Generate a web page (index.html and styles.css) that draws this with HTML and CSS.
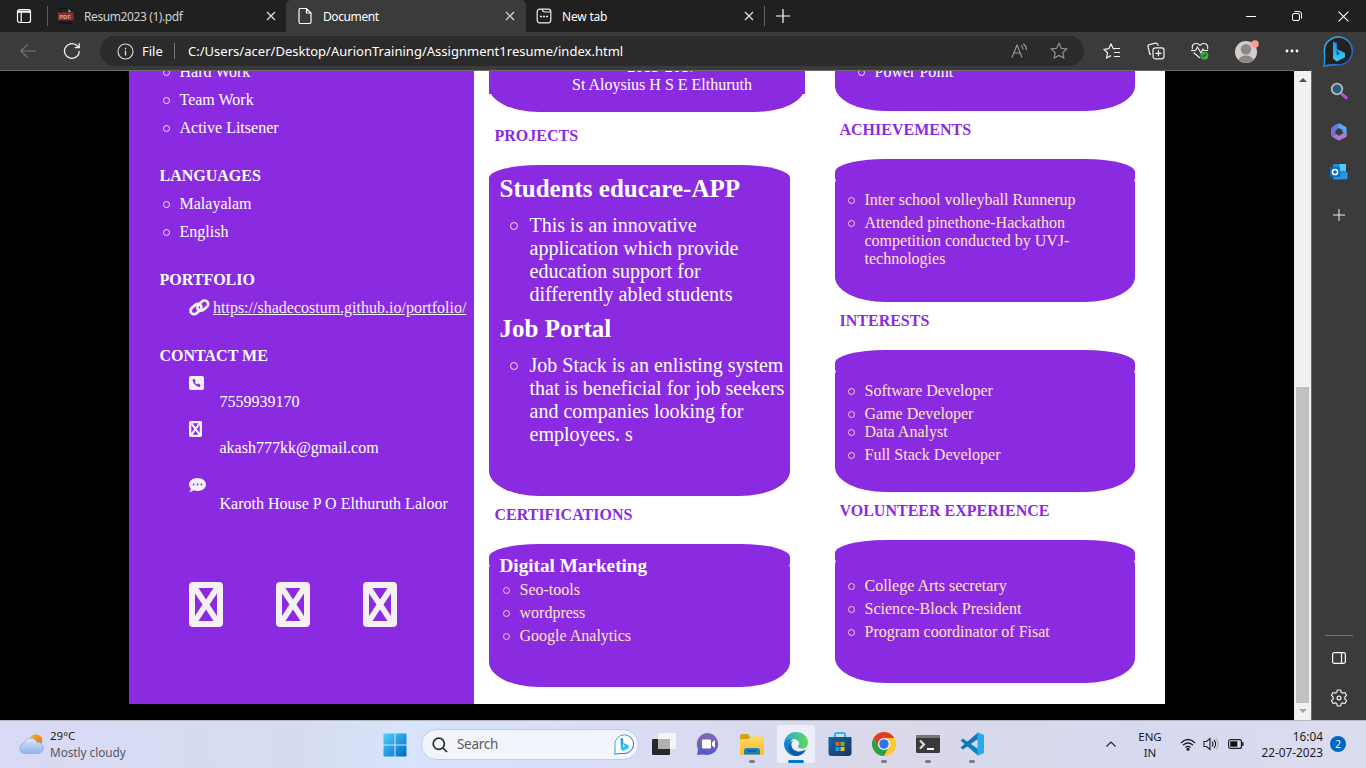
FILE: index.html
```html
<!DOCTYPE html>
<html lang="en">
<head>
<meta charset="utf-8">
<title>Document</title>
<link rel="stylesheet" href="styles.css">
</head>
<body>
<svg class="defs" width="0" height="0">
  <defs>
    <linearGradient id="gBing" x1="0" y1="0" x2="1" y2="1"><stop offset="0" stop-color="#2fc6ee"/><stop offset="1" stop-color="#1b50d0"/></linearGradient>
    <linearGradient id="gB" x1="0" y1="0" x2="0" y2="1"><stop offset="0" stop-color="#1c8cf5"/><stop offset="1" stop-color="#39d0f5"/></linearGradient>
    <linearGradient id="gWin" x1="0" y1="0" x2="1" y2="1"><stop offset="0" stop-color="#4bd2fb"/><stop offset="1" stop-color="#0067c8"/></linearGradient>
    <linearGradient id="gCloud" x1="0" y1="0" x2="0" y2="1"><stop offset="0" stop-color="#dfeafa"/><stop offset="1" stop-color="#8db2ec"/></linearGradient>
    <linearGradient id="gSun" x1="0" y1="0" x2="1" y2="1"><stop offset="0" stop-color="#f7b52a"/><stop offset="1" stop-color="#ee6a0c"/></linearGradient>
    <linearGradient id="gChat" x1="0" y1="0" x2="0" y2="1"><stop offset="0" stop-color="#8a67b5"/><stop offset="1" stop-color="#5059c9"/></linearGradient>
    <linearGradient id="gFold" x1="0" y1="0" x2="0" y2="1"><stop offset="0" stop-color="#ffd95e"/><stop offset="1" stop-color="#f7bd2d"/></linearGradient>
    <linearGradient id="gEdge" x1="0" y1="0" x2="1" y2="0"><stop offset="0" stop-color="#1fa5dd"/><stop offset="1" stop-color="#62dc55"/></linearGradient>
    <linearGradient id="gStore" x1="0" y1="0" x2="1" y2="1"><stop offset="0" stop-color="#0f67b3"/><stop offset="1" stop-color="#1f3358"/></linearGradient>
    <symbol id="close" viewBox="0 0 10 10"><path d="M1 1l8 8M9 1L1 9" stroke="#e2e2e2" stroke-width="1.2" fill="none"/></symbol>
    <symbol id="missing" viewBox="0 0 34 45"><path fill-rule="evenodd" fill="#f5f0f2" d="M4 0H30Q34 0 34 4V41Q34 45 30 45H4Q0 45 0 41V4Q0 0 4 0ZM9.500 6L17 17.500L24.500 6ZM6 11.500V34L13.500 22.500ZM28 11.500V34L20.500 22.500ZM9.500 39H24.500L17 27.500Z"/></symbol>
    <symbol id="bing" viewBox="0 0 30 31"><path d="M1 30Q2.200 24 1.300 15A14 14 0 1 1 15 29Q8 28.500 1 30Z" fill="inherit" stroke="url(#gBing)" stroke-width="1.500"/><path d="M10 5.500l3.800 1.400V19.300l3-1.700-1.800-1.200-1.300-3.500 8.300 4v4L14 25.500 10 22.800Z" fill="url(#gB)"/></symbol>
  </defs>
</svg>
<div class="screen">
  <header class="titlebar">
    <div class="tab-actions"><svg width="16" height="16" viewBox="0 0 16 16" fill="none" stroke="#fff" stroke-width="1.200"><rect x="1.500" y="1.500" width="13" height="13" rx="2"/><path d="M2 3h12M2 4.200h12M5.200 4v10"/></svg></div>
    <div class="tab tab-first">
      <svg class="tab-icon" width="16" height="16" viewBox="0 0 16 16"><path d="M2.500 .5h8l3 3v12h-11z" fill="#222" stroke="#111"/><path d="M10.500 1v3h3" fill="#aaa"/><rect x="1" y="12" width="13" height="3.500" fill="#161616"/><rect x="0" y="4.500" width="15.500" height="8" fill="#873030"/><text x="1.300" y="10.700" class="pdf-label">PDF</text></svg>
      <span class="tab-name t-resume">Resum2023 (1).pdf</span><svg class="tab-close" width="10" height="10"><use href="#close"/></svg>
    </div>
    <div class="tab tab-active">
      <svg class="tab-icon" width="16" height="18" viewBox="0 0 16 18" fill="none" stroke="#fff" stroke-width="1.200"><path d="M3.500 1.500h6l4.500 4.500v9q0 1.500-1.500 1.500h-9Q2 16.500 2 15V3q0-1.500 1.500-1.500zM9.500 1.500V6H14"/></svg>
      <span class="tab-name t-doc">Document</span><svg class="tab-close" width="10" height="10"><use href="#close"/></svg>
    </div>
    <div class="tab">
      <svg class="tab-icon" width="16" height="16" viewBox="0 0 16 16" fill="none" stroke="#eee" stroke-width="1.200"><rect x="1.200" y="1.200" width="13.600" height="13.600" rx="2.500"/><path d="M6.500 1.500Q6.500 4 9 4h5.500"/><path d="M4 8.500h2M7 8.500h2M10 8.500h2" stroke-width="1.600"/></svg>
      <span class="tab-name t-new">New tab</span><svg class="tab-close" width="10" height="10"><use href="#close"/></svg>
    </div>
    <div class="new-tab"><svg width="14" height="14" viewBox="0 0 14 14" stroke="#fff" stroke-width="1.200"><path d="M7 0v14M0 7h14"/></svg></div>
    <div class="window-buttons">
      <span><svg width="10" height="10" viewBox="0 0 10 10"><path d="M0 5.500h10" stroke="#fff"/></svg></span>
      <span><svg width="10" height="10" viewBox="0 0 10 10" fill="none" stroke="#fff"><rect x=".5" y="2.500" width="7" height="7" rx="1.500"/><path d="M2.500 .5H7q2.500 0 2.500 2.500v4.500"/></svg></span>
      <span><svg width="11" height="11" viewBox="0 0 10 10"><path d="M.5 .5l9 9M9.500 .5l-9 9" stroke="#fff"/></svg></span>
    </div>
  </header>

  <div class="toolbar">
    <div class="nav-btn back"><svg width="16" height="14" viewBox="0 0 16 14" fill="none" stroke="#777" stroke-width="1.100"><path d="M16 7H.8M7.500 .5L.8 7l6.700 6.500"/></svg></div>
    <div class="nav-btn reload"><svg width="18" height="18" viewBox="0 0 18 18" fill="none" stroke="#f2f2f2" stroke-width="1.300"><path d="M16.300 9A7.400 7.400 0 1 1 13.500 3.200L16 5.500M16.200 1.200v4.500h-4.500"/></svg></div>
    <div class="address">
      <svg class="info" width="17" height="17" viewBox="0 0 17 17" fill="none" stroke="#ddd"><circle cx="8.500" cy="8.500" r="7.500" stroke-width="1.100"/><path d="M8.500 7.500v5M8.500 4.700v1.500" stroke-width="1.300"/></svg>
      <span class="scheme">File</span><span class="address-sep"></span>
      <span class="url">C:/Users/acer/Desktop/AurionTraining/Assignment1resume/index.html</span>
      <svg class="read" width="18" height="16" viewBox="0 0 18 16" fill="none" stroke="#999" stroke-width="1.100"><path d="M1 14.500L6 2l5 12.500M2.800 10h6.500M10 2.500q2 1.500 2 4M12.300 .8q3.200 2.500 3.200 6.500"/></svg>
      <svg class="fav" width="18" height="18" viewBox="0 0 18 18" fill="none" stroke="#999" stroke-width="1.100"><path d="M9 1.300l2.300 4.900 5.400.7-3.900 3.700 1 5.400L9 13.400 4.200 16l1-5.400L1.300 6.900l5.400-.7z"/></svg>
    </div>
    <div class="tools">
      <span><svg width="18" height="17" viewBox="0 0 18 17" fill="none" stroke="#f2f2f2" stroke-width="1.200"><path d="M12 5.700H10.300L8 1 5.700 5.700 1 6.400 4.500 9.800 3.600 15 8 12.600M10.500 5.500H17M11 9.500h6M11 13.500h6"/></svg></span>
      <span><svg width="18" height="18" viewBox="0 0 18 18" fill="none" stroke="#f2f2f2" stroke-width="1.200"><rect x="6" y="5.800" width="11" height="11" rx="2.200"/><path d="M11.500 8.300v6M8.500 11.300h6M4 12.700Q2.800 12.400 2.500 11L1 4.500Q.7 3 2.300 2.600L8.500 1.200q1.500-.3 2.300 1.200l.5 1.300"/></svg></span>
      <span><svg width="18" height="18" viewBox="0 0 18 18" fill="none" stroke="#f2f2f2" stroke-width="1.100"><path d="M1.500 7C0 1 6.500 .3 9 3.300 11.500 .3 18 1 16.500 7M2.500 10.500L9 16M0 8.500h4.500L6.500 5 10 11l2-4 1 1.500h4"/><circle cx="13.500" cy="13.700" r="3.900" fill="#3fa648" stroke="none"/><path d="M11.800 14.700l3.300-2.500" stroke="#164d1a"/></svg></span>
      <span class="wide"><svg width="26" height="26" viewBox="0 0 26 26"><circle cx="13" cy="14" r="11" fill="#d1cdca"/><circle cx="13" cy="11.200" r="5.200" fill="#8d8885"/><path d="M5.500 22Q7 17.500 13 17.500T20.500 22Q17 25 13 25T5.500 22Z" fill="#8d8885"/><circle cx="22" cy="6" r="3.800" fill="#fb9c96"/></svg></span>
      <span><svg width="14" height="4" viewBox="0 0 14 4" fill="#fff"><circle cx="2" cy="2" r="1.400"/><circle cx="7" cy="2" r="1.400"/><circle cx="12" cy="2" r="1.400"/></svg></span>
      <span class="wide bing-dark"><svg width="30" height="31"><use href="#bing"/></svg></span>
    </div>
  </div>

  <div class="workspace">
    <main class="viewport">
      <div class="resume">
        <aside class="side">
          <ul class="side-list skills"><li>Hard Work</li><li>Team Work</li><li>Active Litsener</li></ul>
          <h4>LANGUAGES</h4>
          <ul class="side-list"><li>Malayalam</li><li>English</li></ul>
          <h4>PORTFOLIO</h4>
          <div class="portfolio"><svg width="21" height="18" viewBox="0 0 21 18" fill="none" stroke="#f5f0f2" stroke-width="2.700"><rect x="-5.800" y="-3.600" width="12" height="7.200" rx="3.600" transform="translate(6.800 10.200) rotate(-40)"/><rect x="-6.200" y="-3.600" width="12" height="7.200" rx="3.600" transform="translate(13.900 6.500) rotate(-40)"/></svg><a>https://shadecostum.github.io/portfolio/</a></div>
          <h4 class="contact-title">CONTACT ME</h4>
          <div class="contact phone"><svg width="15" height="14" viewBox="0 0 15 14"><rect width="15" height="14" rx="2" fill="#f5f0f2"/><path d="M3.500 3.500L5.600 2.900 6.700 5.300 5.700 6.200Q6.400 7.700 8.200 8.600L9.200 7.600 11.500 8.700 11 10.900Q9 11.200 6.500 9.200T3.500 3.500Z" fill="#8a2be2"/></svg><p>7559939170</p></div>
          <div class="contact mail"><svg width="13" height="16" viewBox="0 0 34 45" preserveAspectRatio="none"><use href="#missing" width="34" height="45"/></svg><p>akash777kk@gmail.com</p></div>
          <div class="contact place"><svg width="17" height="14" viewBox="0 0 17 14"><path d="M8.500 0C13.200 0 17 2.900 17 6.500S13.200 13 8.500 13Q6.500 13 4.700 12.300 2.700 14 .2 14 1.900 12.300 1.900 10.600 0 8.800 0 6.500C0 2.900 3.800 0 8.500 0Z" fill="#f5f0f2"/><g fill="#8a2be2"><circle cx="4.600" cy="6.500" r=".9"/><circle cx="8.500" cy="6.500" r=".9"/><circle cx="12.400" cy="6.500" r=".9"/></g></svg><p>Karoth House P O Elthuruth Laloor</p></div>
          <div class="socials"><svg width="34" height="45"><use href="#missing"/></svg><svg width="34" height="45"><use href="#missing"/></svg><svg width="34" height="45"><use href="#missing"/></svg></div>
        </aside>
        <section class="middle">
          <div class="education card"><div class="school">2015-2017<br>St Aloysius H S E Elthuruth</div></div>
          <h4>PROJECTS</h4>
          <div class="card projects">
            <h2>Students educare-APP</h2>
            <ul><li>This is an innovative<br>application which provide<br>education support for<br>differently abled students</li></ul>
            <h2>Job Portal</h2>
            <ul><li>Job Stack is an enlisting system<br>that is beneficial for job seekers<br>and companies looking for<br>employees. s</li></ul>
          </div>
          <h4 class="close-title">CERTIFICATIONS</h4>
          <div class="card certs notched">
            <h3>Digital Marketing</h3>
            <ul class="plain"><li>Seo-tools</li><li>wordpress</li><li>Google Analytics</li></ul>
          </div>
        </section>
        <section class="right">
          <div class="card tools-card"><ul class="plain"><li>Power Point</li></ul></div>
          <h4>ACHIEVEMENTS</h4>
          <div class="card notched achievements"><ul class="plain"><li>Inter school volleyball Runnerup</li><li>Attended pinethone-Hackathon<br>competition conducted by UVJ-<br>technologies</li></ul></div>
          <h4>INTERESTS</h4>
          <div class="card notched interests"><ul class="plain"><li>Software Developer</li><li>Game Developer</li><li class="tight">Data Analyst</li><li>Full Stack Developer</li></ul></div>
          <h4 class="volunteer-title">VOLUNTEER EXPERIENCE</h4>
          <div class="card notched volunteer"><ul class="plain"><li>College Arts secretary</li><li>Science-Block President</li><li>Program coordinator of Fisat</li></ul></div>
        </section>
      </div>
    </main>
    <div class="scrollbar"><i class="arrow-up"></i><i class="thumb"></i><i class="arrow-down"></i></div>
    <nav class="sidebar">
      <span><svg width="18" height="18" viewBox="0 0 18 18"><path d="M12 12l4 3.700" stroke="#c848ee" stroke-width="3" stroke-linecap="round"/><circle cx="7" cy="7" r="5.300" fill="#23607f" stroke="#b5b5b5" stroke-width="1.800"/></svg></span>
      <span class="s365"><svg width="18" height="18" viewBox="0 0 18 18"><path d="M6 1.300L10 .3 8.500 5.300 5.500 7.500V11L2 13.500 1 12.500V5Z" fill="#6f74dc"/><path d="M9.500 .3L16.500 4.500v7L12.500 9V7L7.500 4.500Z" fill="#4cb0f0"/><path d="M16.800 9v4.500L9 17.800 1.800 13.500 6 11l3 1.800 3.500-2.300Z" fill="#ab7bcf"/></svg></span>
      <span><svg width="18" height="18" viewBox="0 0 18 18"><rect x="3" y="1" width="13" height="15" rx="1" fill="#1c8ddb"/><path d="M9.500 1H16v7H9.500z" fill="#52ccf7"/><path d="M3 15.500l14.500-7V15q0 1.500-1.500 1.500H3z" fill="#2898e0"/><rect x="0" y="4" width="10" height="10" rx="1" fill="#0f6cbd"/><circle cx="5" cy="9" r="2.600" fill="none" stroke="#fff" stroke-width="1.500"/></svg></span>
      <span class="add"><svg width="12" height="12" viewBox="0 0 12 12"><path d="M6 0v12M0 6h12" stroke="#eee"/></svg></span>
      <span class="sidebar-end"><svg width="14" height="12" viewBox="0 0 14 12" fill="none" stroke="#fff" stroke-width="1.200"><rect x=".6" y=".6" width="12.800" height="10.800" rx="1.800"/><path d="M9.500 1v10"/></svg></span>
      <span><svg width="18" height="18" viewBox="0 0 18 18" fill="none" stroke="#eee" stroke-width="1.200"><path d="M7.400 1h3.200l.7 2.400 1.200.7 2.400-.6L16.500 6.300l-1.700 1.900v1.600l1.700 1.900-1.600 2.800-2.400-.6-1.200.7-.7 2.400H7.400l-.7-2.400-1.200-.7-2.400.6-1.600-2.800 1.700-1.900V8.200L1.500 6.300l1.600-2.800 2.400.6 1.200-.7z" stroke-linejoin="round"/><circle cx="9" cy="9" r="1.900"/></svg></span>
    </nav>
  </div>

  <footer class="taskbar">
    <div class="weather"><svg width="25" height="22" viewBox="0 0 25 22"><circle cx="17" cy="7.500" r="6.300" fill="url(#gSun)"/><path d="M5.500 20.500a5 5 0 0 1-.6-9.900A7 7 0 0 1 18 9.200a5.700 5.700 0 0 1 1.500 11.300Z" fill="url(#gCloud)" stroke="#7fa6e6" stroke-width=".6"/></svg><div><b>29°C</b><span>Mostly cloudy</span></div></div>
    <svg class="start" width="24" height="24" viewBox="0 0 24 24" fill="url(#gWin)"><path d="M1.500 .5H11.500V11.500H.5V1.500Q.5 .5 1.500 .5ZM12.500 .5H22.500Q23.500 .5 23.500 1.500V11.500H12.500ZM.5 12.500H11.500V23.500H1.500Q.5 23.500 .5 22.500ZM12.500 12.500H23.500V22.500Q23.500 23.500 22.500 23.500H12.500Z"/></svg>
    <div class="search"><svg width="16" height="16" viewBox="0 0 16 16" fill="none" stroke="#2b2b2b" stroke-width="1.700"><circle cx="6.800" cy="6.800" r="5.600"/><path d="M11 11l4 4"/></svg><span>Search</span><svg class="bing-light" width="20" height="21"><use href="#bing"/></svg></div>
    <div class="apps">
      <span><svg width="24" height="24" viewBox="0 0 24 24"><rect x="0" y="7" width="18" height="16" rx="1" fill="#282828"/><rect x="6" y="1" width="18" height="16" rx="1" fill="#f5f5f5"/><path d="M6 7h12v10H6z" fill="#b0b0b0"/></svg></span>
      <span><svg width="24" height="24" viewBox="0 0 24 24"><path d="M12 1a11 11 0 1 1-4 21.500L1.200 23 2 17A11 11 0 0 1 12 1Z" fill="url(#gChat)"/><rect x="6" y="7.500" width="9" height="9" rx="1.200" fill="#fff"/><path d="M16 10.500l3-2.500v8l-3-2.500z" fill="#fff"/></svg></span>
      <span class="open"><svg width="26" height="24" viewBox="0 0 26 24"><path d="M1 4q0-2 2-2h6l2 2.500V8H1z" fill="#dc9b10"/><path d="M1 7h8l3-2.500h11q2 0 2 2V21q0 2-2 2H3q-2 0-2-2Z" fill="url(#gFold)"/><path d="M5 22.500V19q0-3 3-3h10q3 0 3 3v3.500Z" fill="#157fc9"/><path d="M9 19h8" stroke="#0a4f91" stroke-width="1.400"/></svg></span>
      <span class="open current"><svg width="26" height="26" viewBox="0 0 26 26"><path d="M1 12C2 5 7 1 13 1c7 0 12 5 12 10.500 0 4-3 6-6 6-2.500 0-4-1-4-2 0-.8 1-1.500 1-3 0-2.800-3-4.500-6-4.500-4 0-7 2-9 4Z" fill="url(#gEdge)"/><path d="M1 12C3 8.500 7 7.500 10 8c-2 1-4 4-4 7.500 0 5 4 9 8.500 9.300C7.500 26 .5 20 1 12Z" fill="#1182ce"/><path d="M10.500 9.500C8.500 11 8 13 8.500 15c1 4.500 6.500 7 12 4.500l2.500-.8C21 22.500 17.500 25 13.500 25 8.500 24.500 5 20 5.500 15.500 6 12 8 10 10.500 9.500Z" fill="#105ba9"/></svg></span>
      <span><svg width="24" height="26" viewBox="0 0 24 26"><path d="M7 8V3.500Q7 2 8.500 2h7Q17 2 17 3.500V8" fill="none" stroke="#2eb5ef" stroke-width="2"/><path d="M.5 6h23v16q0 3-3 3h-17q-3 0-3-3Z" fill="url(#gStore)"/><path d="M7.500 11h4v4h-4z" fill="#f25022"/><path d="M12.500 11h4v4h-4z" fill="#7fba00"/><path d="M7.500 16h4v4h-4z" fill="#00a4ef"/><path d="M12.500 16h4v4h-4z" fill="#ffb900"/></svg></span>
      <span class="open"><svg width="26" height="26" viewBox="0 0 26 26"><circle cx="13" cy="13" r="12" fill="#fcc934"/><path d="M2.600 7A12 12 0 0 1 23.400 7H13L7.800 16Z" fill="#e33b2e"/><path d="M2.600 7A12 12 0 0 0 13 25L18.200 16H7.800Z" fill="#2da04a"/><path d="M13 7H23.400A12 12 0 0 1 13 25L18.200 16Z" fill="#fcc934"/><circle cx="13" cy="13" r="6" fill="#fff"/><circle cx="13" cy="13" r="4.800" fill="#3275e8"/></svg></span>
      <span class="open"><svg width="24" height="20" viewBox="0 0 24 20"><rect y="1" width="24" height="18" rx="1.500" fill="#3a3a3a"/><path d="M0 4V2.500Q0 1 1.500 1h21Q24 1 24 2.500V4z" fill="#777"/><path d="M4 6.500l4 4-4 4" fill="none" stroke="#ddd" stroke-width="2.200"/><path d="M11 15h7" stroke="#fff" stroke-width="2"/></svg></span>
      <span class="open"><svg width="26" height="26" viewBox="0 0 26 26"><path d="M19 1.500v23L1.500 9.500l2.500-2L19 18Z" fill="#0b80c6"/><path d="M19 1.500V8L4 18.500l-2.500-2Z" fill="#1177b9"/><path d="M18.500 1l6.500 3v18l-6.500 3z" fill="#29a8ee"/></svg></span>
    </div>
    <div class="tray">
      <svg class="chev" width="10" height="6" viewBox="0 0 10 6"><path d="M.5 5.500L5 1l4.500 4.500" fill="none" stroke="#222" stroke-width="1.200"/></svg>
      <div class="lang">ENG<br>IN</div>
      <svg class="wifi" width="16" height="13" viewBox="0 0 16 13" fill="none" stroke="#222" stroke-width="1.200"><path d="M.8 5Q8-2 15.200 5M3 7.300q5-4.600 10 0M5.300 9.500q2.700-2.300 5.400 0"/><circle cx="8" cy="11.200" r="1" fill="#222"/></svg>
      <svg class="sound" width="17" height="14" viewBox="0 0 17 14" fill="none" stroke="#222" stroke-width="1.100"><path d="M1 4.500h2.500L7 1.500v11l-3.500-3H1zM9 4.500q2 2.500 0 5M11 2.800q3.200 4.200 0 8.400"/><path d="M13 1q4 6 0 12" stroke="#aaa"/></svg>
      <svg class="battery" width="16" height="10" viewBox="0 0 16 10"><rect x=".6" y=".6" width="12.800" height="8.800" rx="2" fill="none" stroke="#222" stroke-width="1.200"/><rect x="2.300" y="2.300" width="7" height="5.400" fill="#111"/><path d="M14 3h1.500v4H14z" fill="#222"/></svg>
      <div class="clock">16:04<br>22-07-2023</div>
      <div class="count">2</div>
    </div>
  </footer>
</div>
</body>
</html>
```

FILE: styles.css
```css
*, *::before, *::after { box-sizing: border-box; }
body, h2, h3, h4, ul, p { margin: 0; padding: 0; }
body { background: #000; overflow: hidden; font-family: "Noto Sans", "Open Sans", sans-serif; }
.defs { position: absolute; }
svg { display: block; flex: none; }
.screen { width: 1366px; height: 768px; display: flex; flex-direction: column; overflow: hidden; }

/* browser tabs */
.titlebar { height: 32px; flex: none; display: flex; background: #202020; color: #fff; font-size: 12px; }
.tab-actions { width: 48px; display: flex; align-items: center; justify-content: center; }
.tab { width: 238px; flex: none; display: flex; align-items: center; padding: 0 10px; white-space: nowrap; }
.tab-first { color: #d0d0d0; }
.tab-first::before { content: ""; width: 1px; height: 20px; background: #5c5c5c; margin-left: -11px; margin-right: 10px; }
.tab-active { width: 240px; background: #3b3b3b; border-radius: 5px 5px 0 0; padding-left: 11px; padding-right: 11px; }
.tab-name { flex: 1; margin-left: 10px; }
.t-resume { letter-spacing: -.4px; }
.t-doc { letter-spacing: -.4px; }
.t-new { letter-spacing: -.2px; }
.tab-close { margin-left: auto; }
.new-tab { width: 26px; display: flex; align-items: center; }
.new-tab::before { content: ""; width: 1px; height: 20px; background: #666; margin-right: 11px; }
.window-buttons { display: flex; margin-left: auto; }
.window-buttons span { width: 46px; display: flex; align-items: center; justify-content: center; }

/* address row */
.toolbar { height: 38px; flex: none; display: flex; align-items: center; background: #3b3b3b; color: #fff; }
.nav-btn { display: flex; justify-content: center; }
.back { width: 56px; }
.reload { width: 32px; margin-right: 12px; }
.address { width: 984px; height: 30px; border-radius: 15px; background: #2b2b2b; display: flex; align-items: center; padding: 0 16px 0 17px; font-size: 13px; white-space: nowrap; }
.scheme { width: 32px; margin-left: 8px; }
.address-sep { width: 1px; height: 16px; background: #777; margin-right: 13px; }
.url { flex: 1; letter-spacing: .02px; }
.read { margin-right: 21px; }
.tools { display: flex; align-items: center; padding-left: 6px; }
.tools span { width: 44px; display: flex; justify-content: center; }
.tools .wide { width: 48px; }
.bing-dark { fill: #222; }
.bing-light { fill: #fff; }

/* content area */
.workspace { flex: 1; min-height: 0; display: flex; background: #3b3b3b; }
.viewport { width: 1294px; background: #000; border-top: 1px solid #6a6a6a; padding: 0 129px 16px; overflow: hidden; }
.resume { display: flex; width: 1036px; height: 633px; background: #fff; overflow: hidden; font: 16px/18px "Liberation Serif", "Times New Roman", serif; color: #fff; white-space: nowrap; }
ul { list-style: none; }
li { position: relative; }
li::before { content: ""; position: absolute; left: -17px; top: 6px; width: 7px; height: 7px; border: 1px solid currentColor; border-radius: 50%; opacity: .85; }
h4 { font-size: 16px; line-height: 18px; }
.side { width: 345px; background: #8a2be2; flex: none; padding-left: 30.500px; }
.side-list { padding-left: 20px; line-height: 28px; margin-top: 5px; }
.side-list li::before { top: 11px; }
.side-list.skills { margin-top: -13px; }
.side h4 { margin-top: 25px; }
.portfolio { display: flex; margin: 10px 0 0 29.500px; color: #f5f0f2; }
.portfolio a { margin-left: 3px; text-decoration: underline; }
.side .contact-title { margin-top: 30px; }
.contact { padding-left: 29.500px; }
.contact p { padding-left: 30.500px; }
.phone { margin-top: 11px; }
.phone p { margin-top: 3px; }
.mail { margin-top: 10px; }
.mail p { margin-top: 2px; }
.place { margin-top: 21px; }
.place p { margin-top: 3px; }
.socials { display: flex; gap: 53px; margin: 69px 0 0 29.500px; }

.middle { width: 346px; padding-left: 15px; }
.right { width: 345px; padding-left: 15px; }
.card { width: 301px; background: #8a2be2; border-radius: 50px 50px 50px 50px / 13px 13px 25px 25px; }
.right .card { width: 300px; }
.middle h4, .right h4 { color: #8a2be2; }
.middle h4 { margin: 15px 0 20px 5.500px; }
.right h4 { margin: 10px 0 20px 4.500px; }
.middle .close-title { margin-top: 10px; }
.middle .education { width: 316px; height: 41px; border-radius: 0 0 50px 50px / 0 0 25px 25px; }
.school { height: 23px; padding-left: 30px; background: #8a2be2; text-align: center; overflow: hidden; }
.school::before { content: ""; display: block; margin-top: -13px; }
.projects { height: 331px; padding: 9px 0 0 10.500px; }
.projects h2 { font-size: 25px; line-height: 30px; }
.projects ul { font-size: 20px; line-height: 23px; padding-left: 30px; margin: 10px 0 8px; }
.projects li::before { left: -20px; top: 8px; width: 8px; height: 8px; }
.certs { height: 143px; padding: 10px 0 0 10.500px; }
.certs h3 { font-size: 19.200px; line-height: 23px; margin-bottom: 4px; }
.plain { padding-left: 29.500px; color: #ffe4c4; }
.certs .plain { padding-left: 20px; }
.plain li + li { margin-top: 5px; }
.plain li.tight { margin-top: 0; }
.right .tools-card { display: flex; height: 40px; border-radius: 0 0 50px 50px / 0 0 25px 25px; }
.tools-card .plain { padding-left: 39.500px; margin-top: -8px; color: #fff; }
.right .achievements { height: 143px; padding-top: 32px; }
.interests { height: 142px; padding-top: 32px; }
.right .volunteer-title { margin-top: 10px; }
.volunteer { height: 143px; padding-top: 37px; }
.notched { position: relative; }
.notched::before, .notched::after { content: ""; position: absolute; top: 20px; width: 1px; height: 3px; background: #c79bf0; }
.notched::before { left: 0; }
.notched::after { right: 0; }

/* scrollbar and sidebar */
.scrollbar { width: 17px; margin-top: 1px; background: #f1f1f1; display: flex; flex-direction: column; align-items: center; padding: 7px 0; }
.arrow-up { border: 4px solid transparent; border-top: 0; border-bottom: 4px solid #505050; }
.arrow-down { border: 4px solid transparent; border-bottom: 0; border-top: 4px solid #a3a3a3; margin-top: 6px; }
.thumb { width: 13px; height: 316px; margin-top: auto; background: #c1c1c1; }
.sidebar { width: 55px; border-left: 1px solid #6a6a6a; display: flex; flex-direction: column; padding: 1px 0 2px; }
.sidebar span { height: 40px; display: flex; align-items: center; justify-content: center; }
.sidebar .s365 { height: 41px; }
.sidebar .add { height: 46px; }
.sidebar .sidebar-end { margin-top: auto; height: 43px; background: linear-gradient(#777, #777) center top / 28px 1px no-repeat; padding-top: 3px; }

/* taskbar */
.taskbar { height: 48px; flex: none; display: flex; align-items: center; border-top: 1px solid #b5b5c2; background: linear-gradient(90deg, #d9daf6 0%, #d5dcf0 22%, #d7e4fb 30%, #d9dcf4 48%, #dad8e9 65%, #d6d9ef 85%, #dcdcf0 100%); color: #1b1b1b; font-size: 11px; }
.weather { width: 364px; margin-left: 19px; display: flex; align-items: center; gap: 6px; line-height: 16px; padding-bottom: 2px; }
.weather b, .weather span { display: block; font-weight: 400; }
.weather b { font-size: 11.500px; }
.weather span { color: #555763; font-size: 11.800px; letter-spacing: -.05px; }
.search { width: 218px; height: 31px; margin: 0 3px 0 14px; display: flex; align-items: center; border: 1px solid #c5cae0; border-radius: 16px; background: #f3f5fd; padding: 0 4px 0 10px; font-size: 13.500px; color: #5a5a5a; }
.search span { flex: 1; margin-left: 9px; letter-spacing: -.3px; padding-bottom: 1px; }
.apps { display: flex; height: 47px; padding-bottom: 1px; }
.apps span { width: 44px; display: flex; flex-direction: column; align-items: center; justify-content: center; position: relative; }
.apps .open::after { content: ""; position: absolute; left: 19px; top: 39px; width: 6px; height: 3px; border-radius: 2px; background: #7d7d86; }
.apps .current { width: 38px; height: 38px; margin: 4px 3px 0; border-radius: 4px; background: #eceff9; }
.apps .current::after { left: 11px; top: 35px; width: 16px; background: #0078d4; }
.tray { display: flex; align-items: center; margin-left: auto; padding: 0 20px 1px 0; line-height: 16px; }
.lang { width: 34px; margin: 0 13px 0 17px; padding-top: 1px; text-align: center; font-size: 11.500px; }
.sound { margin: 0 8px 0 7px; }
.clock { width: 79px; text-align: right; font-size: 11.800px; }
.count { width: 16px; height: 16px; margin-left: 7px; border-radius: 50%; background: #0067c0; color: #fff; text-align: center; font-size: 10px; }
.pdf-label { font: bold 6px "Noto Sans", sans-serif; fill: #d8a0a0; }
```
